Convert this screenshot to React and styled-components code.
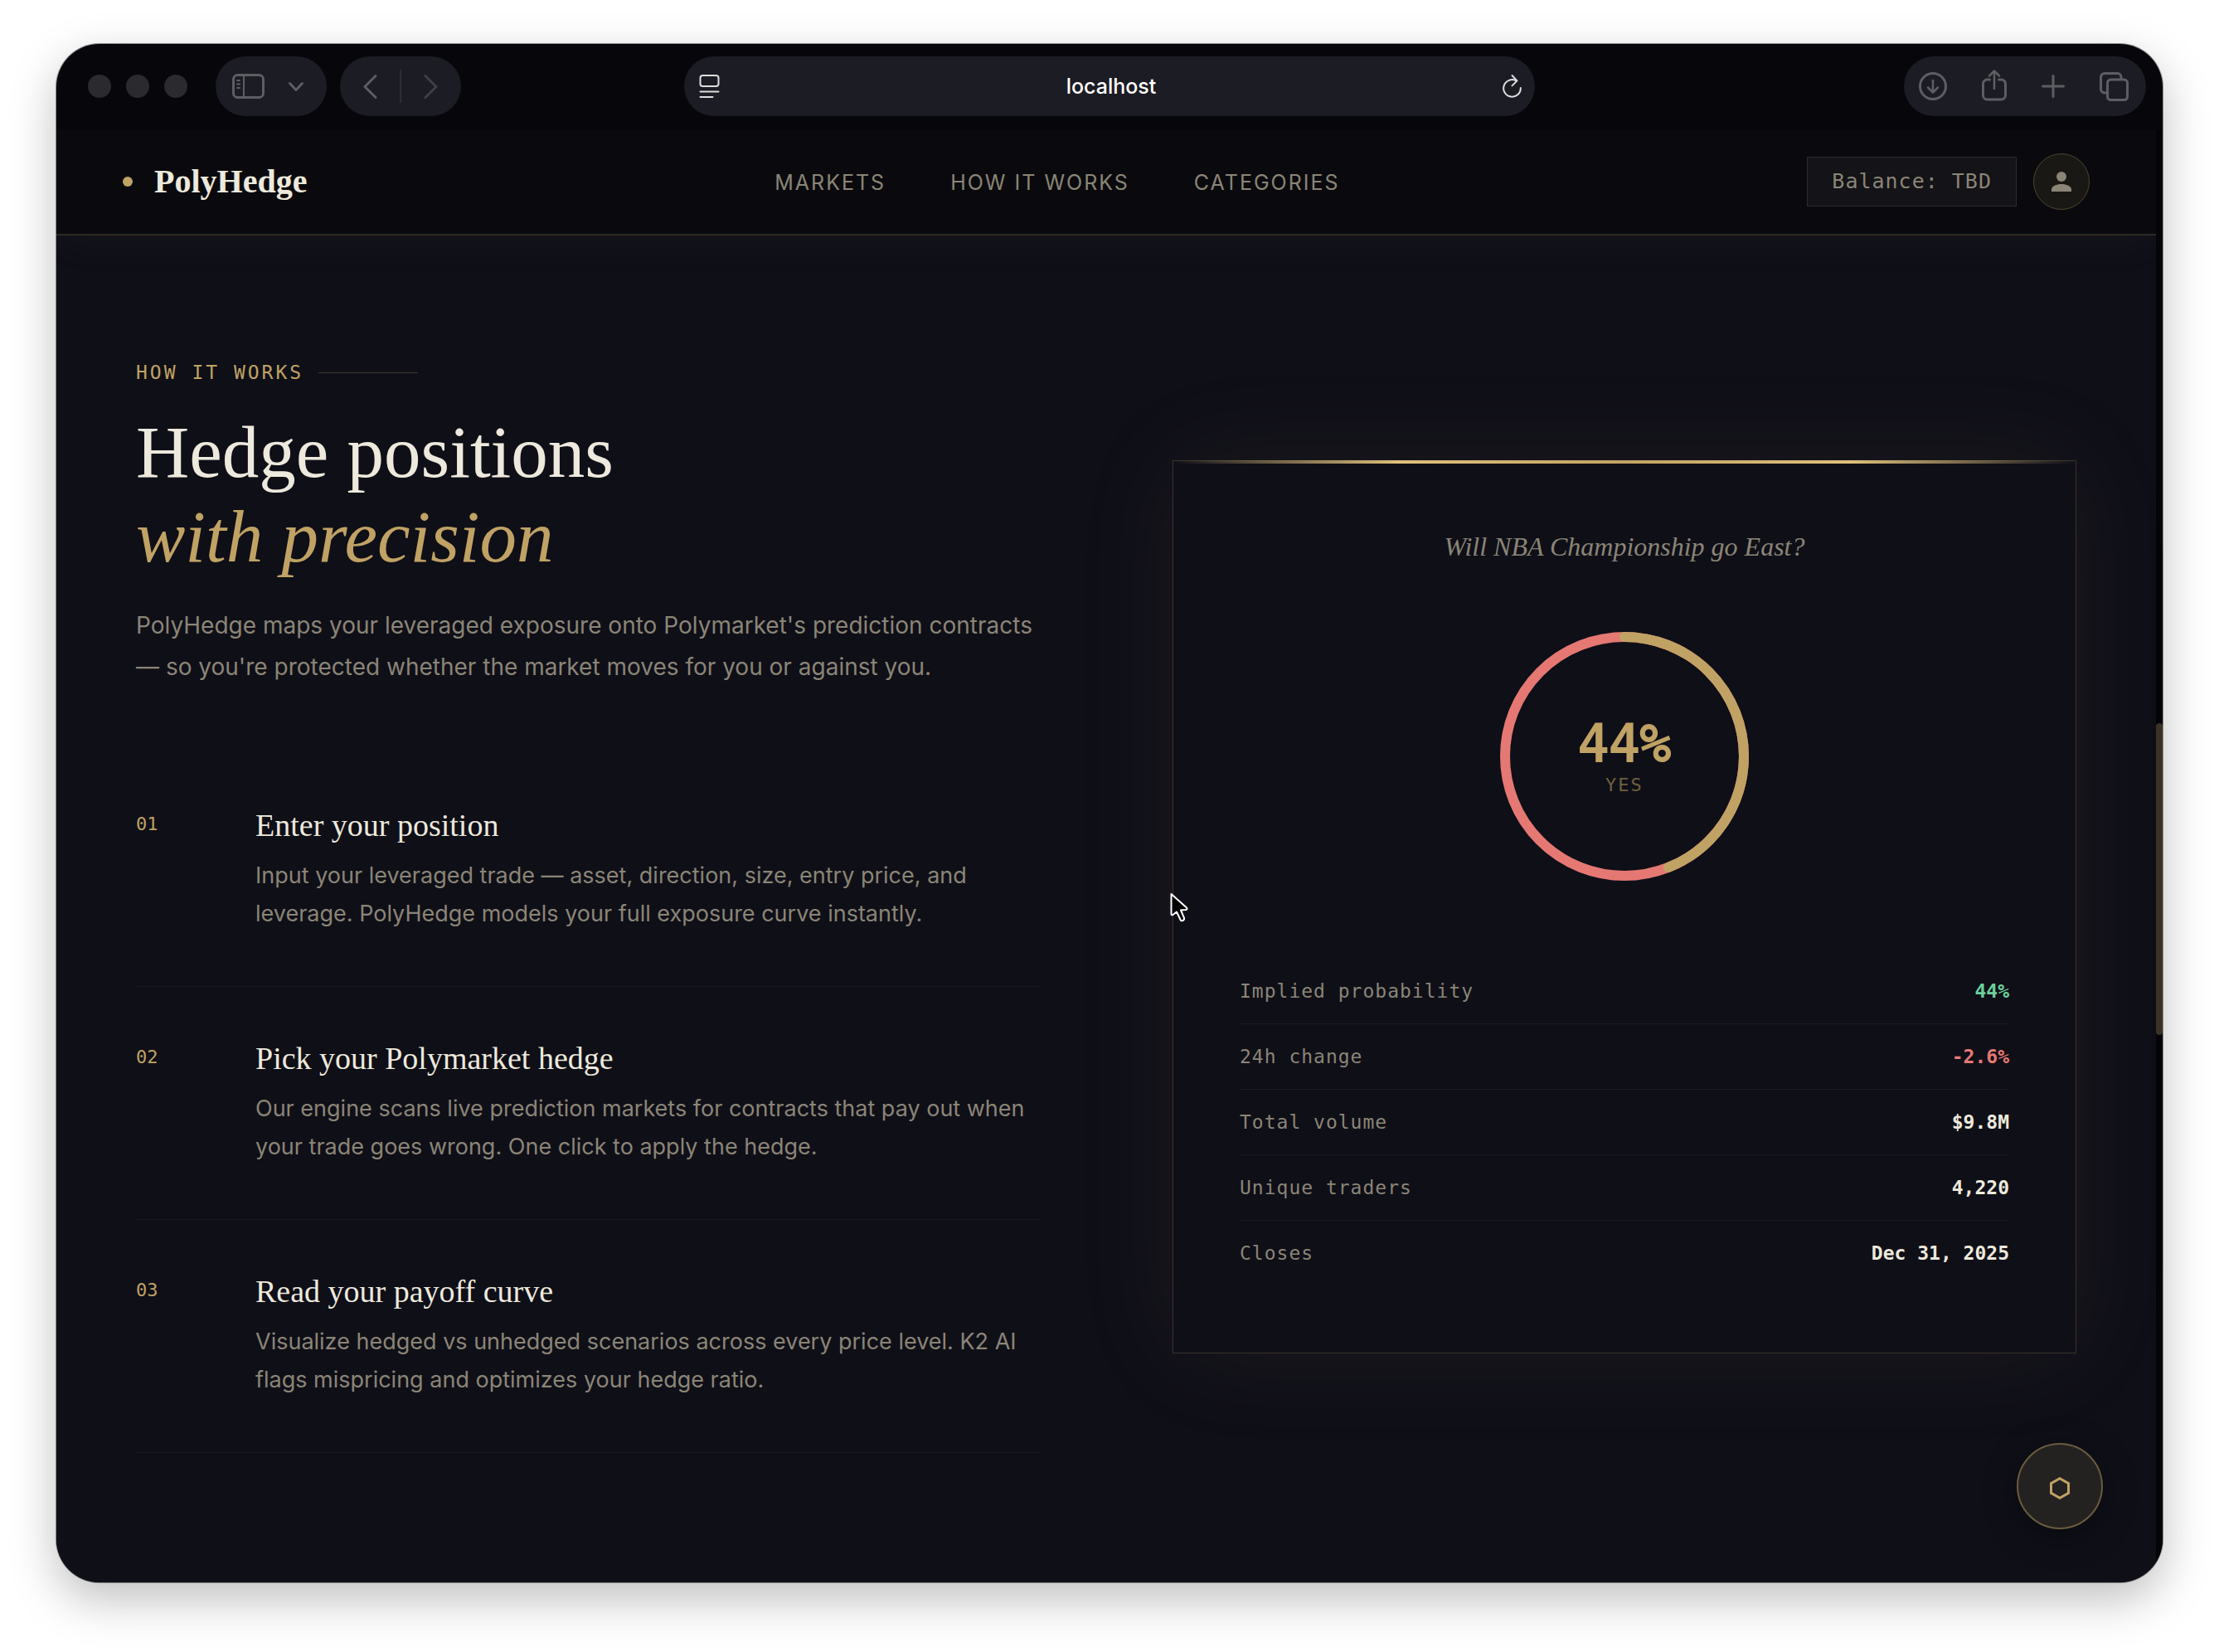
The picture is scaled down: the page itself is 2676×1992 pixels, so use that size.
import React from "react"
import styled, { createGlobalStyle } from "styled-components"

const serif = `"Liberation Serif", "Times New Roman", serif`
const sans = `Inter, "Liberation Sans", sans-serif`
const mono = `"DejaVu Sans Mono", "Liberation Mono", monospace`

const gold = "#c0a264"
const cream = "#ede9dc"
const muted = "#8b8576"
const coral = "#e57873"

const GlobalStyle = createGlobalStyle`
  *, *::before, *::after {
    box-sizing: border-box;
  }
  body {
    margin: 0;
    background: #ffffff;
    font-family: ${sans};
  }
  h1, h2, h3, p, ol {
    margin: 0;
    padding: 0;
  }
  button {
    padding: 0;
    border: 0;
    background: none;
    color: inherit;
    font: inherit;
    cursor: pointer;
  }
  svg {
    display: block;
    overflow: visible;
  }
`

const steps = [
  {
    number: "01",
    title: "Enter your position",
    text:
      "Input your leveraged trade — asset, direction, size, entry price, and leverage. PolyHedge models your full exposure curve instantly.",
  },
  {
    number: "02",
    title: "Pick your Polymarket hedge",
    text:
      "Our engine scans live prediction markets for contracts that pay out when your trade goes wrong. One click to apply the hedge.",
  },
  {
    number: "03",
    title: "Read your payoff curve",
    text:
      "Visualize hedged vs unhedged scenarios across every price level. K2 AI flags mispricing and optimizes your hedge ratio.",
  },
]

const stats = [
  { label: "Implied probability", value: "44%", color: "#6dcf9c" },
  { label: "24h change", value: "-2.6%", color: coral },
  { label: "Total volume", value: "$9.8M" },
  { label: "Unique traders", value: "4,220" },
  { label: "Closes", value: "Dec 31, 2025" },
]

const Icon = ({ width, height, weight = 3, children }) => (
  <svg
    width={width}
    height={height}
    viewBox={`0 0 ${width} ${height}`}
    fill="none"
    stroke="currentColor"
    strokeWidth={weight}
    strokeLinecap="round"
    strokeLinejoin="round"
    aria-hidden="true"
  >
    {children}
  </svg>
)

const BrowserBar = () => (
  <Toolbar>
    <ToolbarSide>
      <Lights>
        <Light />
        <Light />
        <Light />
      </Lights>
      <SidebarPill>
        <button aria-label="Sidebar">
          <Icon width={39} height={30}>
            <rect x="1.5" y="1.5" width="36" height="27" rx="5" />
            <path d="M14 2v26" strokeWidth="2" />
            <path d="M6 8h3M6 12.500h3M6 17h3" strokeWidth="2" />
          </Icon>
        </button>
        <button aria-label="Tab groups">
          <Icon width={18} height={11}>
            <path d="M1.500 1.500l7.500 8 7.500-8" />
          </Icon>
        </button>
      </SidebarPill>
      <HistoryPill>
        <button aria-label="Back">
          <Icon width={17} height={29}>
            <path d="M15 1.500L2 14.500l13 13" />
          </Icon>
        </button>
        <PillRule />
        <Forward aria-label="Forward">
          <Icon width={17} height={29}>
            <path d="M2 1.500l13 13-13 13" />
          </Icon>
        </Forward>
      </HistoryPill>
    </ToolbarSide>
    <Address>
      <button aria-label="Page settings">
        <Icon width={25} height={28} weight={2}>
          <rect x="1.500" y="1" width="22" height="13" rx="3" />
          <path d="M1.500 20.500h22M1.500 27h15" />
        </Icon>
      </button>
      <AddressInput aria-label="Address" defaultValue="localhost" />
      <button aria-label="Reload">
        <Icon width={23} height={28} weight={2}>
          <path d="M16.500 7.400A10.300 10.300 0 1 0 21.800 16" />
          <path d="M11.500 1l6 6.400-6 6" />
        </Icon>
      </button>
    </Address>
    <ToolbarSide $end>
      <ActionsPill>
        <button aria-label="Downloads">
          <Icon width={34} height={34}>
            <circle cx="17" cy="17" r="15.500" />
            <path d="M17 10v14M11 18.500l6 6 6-6" strokeWidth="2.500" />
          </Icon>
        </button>
        <button aria-label="Share">
          <Icon width={30} height={40}>
            <path d="M9.500 12H6.500a5 5 0 0 0-5 5v14a5 5 0 0 0 5 5h17a5 5 0 0 0 5-5V17a5 5 0 0 0-5-5h-3" />
            <path d="M15 23V2M9 7.500L15 1.500l6 6" strokeWidth="2.500" />
          </Icon>
        </button>
        <button aria-label="New tab">
          <Icon width={28} height={28}>
            <path d="M14 1.500v25M1.500 14h25" />
          </Icon>
        </button>
        <button aria-label="Tab overview">
          <Icon width={35} height={35}>
            <rect x="9.500" y="9" width="24" height="24.500" rx="4" />
            <path d="M8 25H6a4.500 4.500 0 0 1-4.500-4.500V6A4.500 4.500 0 0 1 6 1.500h15.500A4.500 4.500 0 0 1 26 6v1.500" />
          </Icon>
        </button>
      </ActionsPill>
    </ToolbarSide>
  </Toolbar>
)

const SiteHeader = () => (
  <Header>
    <Brand href="#">
      <BrandDot />
      PolyHedge
    </Brand>
    <Nav>
      <NavLink href="#markets">Markets</NavLink>
      <NavLink href="#how">How it works</NavLink>
      <NavLink href="#categories">Categories</NavLink>
    </Nav>
    <Account>
      <Balance>Balance: TBD</Balance>
      <Avatar aria-label="Account">
        <svg width="24" height="24" viewBox="0 0 24 24" fill={muted} aria-hidden="true">
          <circle cx="12" cy="6" r="6" />
          <path d="M0 24v-2.500C0 17.500 6 15 12 15s12 2.500 12 6.500V24z" />
        </svg>
      </Avatar>
    </Account>
  </Header>
)

const ProbabilityRing = ({ percent }) => {
  const radius = 144
  const length = 2 * Math.PI * radius
  return (
    <Ring>
      <svg width="300" height="300" viewBox="0 0 300 300" fill="none" strokeWidth="12">
        <circle cx="150" cy="150" r={radius} stroke={coral} />
        <circle
          cx="150"
          cy="150"
          r={radius}
          stroke={gold}
          strokeLinecap="round"
          strokeDasharray={`${(length * percent) / 100} ${length}`}
          transform="rotate(-90 150 150)"
        />
      </svg>
      <RingLabel>
        <RingValue>{percent}%</RingValue>
        <RingSide>YES</RingSide>
      </RingLabel>
    </Ring>
  )
}

const MarketCard = () => (
  <Card>
    <Question>Will NBA Championship go East?</Question>
    <ProbabilityRing percent={44} />
    <Stats>
      <tbody>
        {stats.map(stat => (
          <tr key={stat.label}>
            <StatLabel scope="row">{stat.label}</StatLabel>
            <StatValue $color={stat.color}>{stat.value}</StatValue>
          </tr>
        ))}
      </tbody>
    </Stats>
    <Pointer>
      <svg width="22" height="36" viewBox="0 0 22 36" aria-hidden="true">
        <path
          d="M1.500 2v24.500q.5 1.500 2 .5L8 23.500l4.500 9.500q1 2 3 1t1.500-3L13 21.500l6-.5q2.500-.5 1-2.500z"
          fill="#000000"
          stroke="#ffffff"
          strokeWidth="2"
          strokeLinejoin="round"
        />
      </svg>
    </Pointer>
  </Card>
)

export default function App() {
  return (
    <Stage>
      <GlobalStyle />
      <Window>
        <BrowserBar />
        <Viewport>
          <Page>
            <SiteHeader />
            <Section id="how">
              <div>
                <Eyebrow>HOW IT WORKS</Eyebrow>
                <Heading>
                  Hedge positions
                  <em>with precision</em>
                </Heading>
                <Lead>
                  PolyHedge maps your leveraged exposure onto Polymarket's
                  prediction contracts — so you're protected whether the market
                  moves for you or against you.
                </Lead>
                <ol>
                  {steps.map(step => (
                    <Step key={step.number}>
                      <StepNumber>{step.number}</StepNumber>
                      <div>
                        <StepTitle>{step.title}</StepTitle>
                        <StepText>{step.text}</StepText>
                      </div>
                    </Step>
                  ))}
                </ol>
              </div>
              <MarketCard />
            </Section>
          </Page>
          <ScrollTrack>
            <ScrollThumb />
          </ScrollTrack>
        </Viewport>
        <Fab aria-label="Open assistant">
          <Icon width={24} height={27}>
            <path d="M12 1.700l10.500 6v11.600l-10.500 6-10.500-6V7.700z" strokeLinejoin="miter" />
          </Icon>
        </Fab>
      </Window>
    </Stage>
  )
}

const Stage = styled.div`
  display: flex;
  min-height: 100vh;
  padding: 53px 68px 84px;
`

const Window = styled.div`
  position: relative;
  display: flex;
  flex: 1;
  flex-direction: column;
  overflow: hidden;
  border-radius: 52px;
  background: #06060b;
  box-shadow: 0 0 0 1px rgba(0, 0, 0, 0.4), 0 20px 56px rgba(0, 0, 0, 0.26);
`

const Toolbar = styled.div`
  display: grid;
  grid-template-columns: 1fr 1026px 1fr;
  align-items: center;
  height: 103px;
  padding: 0 20px 1px 38px;
`

const ToolbarSide = styled.div`
  display: flex;
  align-items: center;
  justify-content: ${props => (props.$end ? "flex-end" : "flex-start")};
  gap: 16px;
`

const Lights = styled.div`
  display: flex;
  gap: 18px;
  margin-right: 18px;
`

const Light = styled.span`
  width: 28px;
  height: 28px;
  border-radius: 50%;
  background: #2b2a2f;
`

const Pill = styled.div`
  display: flex;
  align-items: center;
  justify-content: space-between;
  height: 72px;
  border-radius: 36px;
  background: #1c1c24;
  color: #5d5d63;
`

const SidebarPill = styled(Pill)`
  width: 134px;
  padding: 0 28px 0 20px;
`

const HistoryPill = styled(Pill)`
  width: 146px;
  padding: 0 28px;
`

const PillRule = styled.span`
  width: 2px;
  height: 40px;
  background: #2d2d35;
`

const Forward = styled.button`
  opacity: 0.55;
`

const ActionsPill = styled(Pill)`
  width: 292px;
  padding: 0 21px 0 18px;
`

// shifted so that the field stays centred between the uneven bar paddings
const Address = styled(Pill)`
  padding: 0 16px 0 18px;
  margin: 0 9px 0 -9px;
  color: #dedee0;
`

const AddressInput = styled.input`
  flex: 1;
  min-width: 0;
  border: 0;
  outline: 0;
  background: none;
  color: #ffffff;
  font: 500 25px/32px ${sans};
  text-align: center;
`

const Viewport = styled.div`
  display: flex;
  flex: 1;
  overflow: hidden;
`

const Page = styled.main`
  display: flex;
  flex: 1;
  flex-direction: column;
  background: #0f0f18;
`

const ScrollTrack = styled.div`
  display: flex;
  flex-direction: column;
  width: 8px;
  background: #040409;

  &::before {
    content: "";
    flex: 716;
  }
  &::after {
    content: "";
    flex: 660;
  }
`

const ScrollThumb = styled.div`
  flex: 376;
  border-radius: 4px;
  background: #3b3325;
`

const Header = styled.header`
  display: flex;
  align-items: center;
  justify-content: space-between;
  height: 128px;
  padding: 0 80px;
  border-bottom: 2px solid #2f2922;
  background: #0a0a0e;
  box-shadow: 0 0 60px rgba(192, 162, 100, 0.06);
`

const Brand = styled.a`
  display: flex;
  align-items: center;
  gap: 26px;
  color: ${cream};
  font: bold 40px/48px ${serif};
  text-decoration: none;
`

const BrandDot = styled.span`
  width: 12px;
  height: 12px;
  border-radius: 50%;
  background: ${gold};
`

const Nav = styled.nav`
  display: flex;
  gap: 78px;
  padding-top: 2px;
`

const NavLink = styled.a`
  color: ${muted};
  font-size: 25px;
  line-height: 32px;
  letter-spacing: 2px;
  text-decoration: none;
  text-transform: uppercase;
`

const Account = styled.div`
  display: flex;
  align-items: center;
  gap: 20px;
`

const Balance = styled.span`
  padding: 0 29px;
  border: 1px solid #2b2b30;
  background: #131318;
  color: ${muted};
  font: 25px/58px ${mono};
  letter-spacing: 1px;
`

const Avatar = styled.button`
  display: grid;
  place-items: center;
  width: 68px;
  height: 68px;
  && {
    border: 1px solid #51442f;
    background: #191815;
  }
  border-radius: 50%;
`

const Section = styled.section`
  display: grid;
  grid-template-columns: 1fr 1fr;
  align-items: center;
  gap: 160px;
  padding: 150px 96px 96px;
`

const Eyebrow = styled.p`
  display: flex;
  align-items: center;
  gap: 18px;
  color: ${gold};
  font: 23px/30px ${mono};
  letter-spacing: 3px;

  &::after {
    content: "";
    width: 120px;
    height: 1px;
    background: #3f372a;
  }
`

const Heading = styled.h1`
  margin-top: 30px;
  color: ${cream};
  font: 89px/102px ${serif};

  em {
    display: block;
    color: ${gold};
  }
`

const Lead = styled.p`
  margin: 31px 0 80px;
  color: ${muted};
  font-size: 28px;
  line-height: 50px;
`

const Step = styled.li`
  display: grid;
  grid-template-columns: 96px 1fr;
  gap: 48px;
  padding: 64px 0;
  border-bottom: 1px solid #1a1a23;
`

const StepNumber = styled.span`
  color: ${gold};
  font: 22px/42px ${mono};
`

const StepTitle = styled.h3`
  color: ${cream};
  font: 38px/44px ${serif};
`

const StepText = styled.p`
  margin-top: 16px;
  color: ${muted};
  font-size: 27px;
  line-height: 46px;
`

const Card = styled.article`
  position: relative;
  padding: 80px;
  border: 1px solid #3a322a;
  background: #0f0f18;
  box-shadow: 0 0 120px rgba(192, 162, 100, 0.08);

  &::before {
    content: "";
    position: absolute;
    top: -1px;
    right: 0;
    left: 0;
    height: 4px;
    background: linear-gradient(90deg, transparent, #dfc07c 25%, ${gold} 50%, #dfc07c 75%, transparent);
  }
`

const Question = styled.h2`
  color: ${muted};
  font: italic 32px/46px ${serif};
  text-align: center;
`

const Ring = styled.div`
  display: grid;
  place-items: center;
  margin: 80px 0 94px;

  & > * {
    grid-area: 1 / 1;
  }
`

const RingLabel = styled.div`
  display: flex;
  flex-direction: column;
  align-items: center;
  font-family: ${mono};
`

const RingValue = styled.strong`
  color: ${gold};
  font-size: 62px;
  font-weight: 400;
  line-height: 70px;
  -webkit-text-stroke: 2px ${gold};
`

const RingSide = styled.span`
  color: #6f5f40;
  font-size: 22px;
  line-height: 30px;
  letter-spacing: 2px;
`

const Stats = styled.table`
  width: 100%;
  border-collapse: collapse;
  font: 23px/30px ${mono};

  tr {
    height: 79px;
  }
  tr + tr {
    border-top: 1px solid #1b1b24;
  }
`

const StatLabel = styled.th`
  padding: 0;
  color: ${muted};
  font-weight: 400;
  letter-spacing: 1px;
  text-align: left;
`

const StatValue = styled.td`
  padding: 0;
  color: ${props => props.$color || cream};
  font-weight: 700;
  text-align: right;
`

const Pointer = styled.span`
  position: absolute;
  top: 520px;
  left: -4px;
`

const Fab = styled.button`
  position: absolute;
  right: 72px;
  bottom: 64px;
  display: grid;
  place-items: center;
  width: 104px;
  height: 104px;
  border-radius: 50%;
  && {
    padding-top: 4px;
    border: 2px solid #6b5b3f;
    background: #242221;
    color: ${gold};
  }
  box-shadow: 0 8px 40px rgba(0, 0, 0, 0.4);
`
